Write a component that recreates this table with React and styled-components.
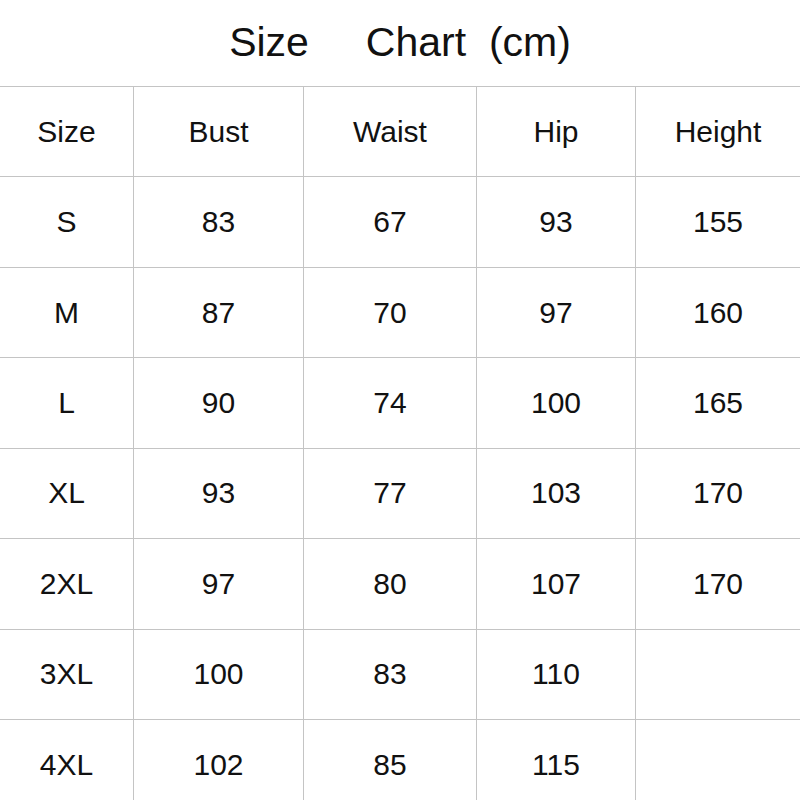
import React from "react";
import styled, { createGlobalStyle } from "styled-components";

const Global = createGlobalStyle`
  html, body {
    margin: 0;
    padding: 0;
    background: #fff;
  }
  body {
    font-family: "Liberation Sans", Arial, sans-serif;
    color: #111;
    overflow: hidden;
  }
`;

const Page = styled.div`
  width: 800px;
  height: 800px;
  overflow: hidden;
`;

const Title = styled.h1`
  margin: 0;
  height: 86px;
  display: flex;
  align-items: center;
  justify-content: center;
  font-size: 41px;
  font-weight: 400;
  white-space: pre;
  padding-bottom: 2px;
  box-sizing: border-box;
`;

const Grid = styled.div`
  display: grid;
  grid-template-columns: 133px 170px 173px 159px 165px;
  grid-auto-rows: 90.43px;
`;

const Cell = styled.div`
  box-sizing: border-box;
  display: flex;
  align-items: center;
  justify-content: center;
  border-top: 1.5px solid #c4c4c4;
  border-left: ${(p) => (p.$first ? "none" : "1.5px solid #c4c4c4")};
  font-size: 30px;
`;

const columns = ["Size", "Bust", "Waist", "Hip", "Height"];

const rows = [
  ["S", "83", "67", "93", "155"],
  ["M", "87", "70", "97", "160"],
  ["L", "90", "74", "100", "165"],
  ["XL", "93", "77", "103", "170"],
  ["2XL", "97", "80", "107", "170"],
  ["3XL", "100", "83", "110", ""],
  ["4XL", "102", "85", "115", ""],
];

export default function App() {
  return (
    <Page>
      <Global />
      <Title>{"Size     Chart  (cm)"}</Title>
      <Grid>
        {columns.map((c, i) => (
          <Cell key={c} $first={i === 0}>
            {c}
          </Cell>
        ))}
        {rows.map((row, r) =>
          row.map((value, i) => (
            <Cell key={r + "-" + i} $first={i === 0}>
              {value}
            </Cell>
          ))
        )}
      </Grid>
    </Page>
  );
}
